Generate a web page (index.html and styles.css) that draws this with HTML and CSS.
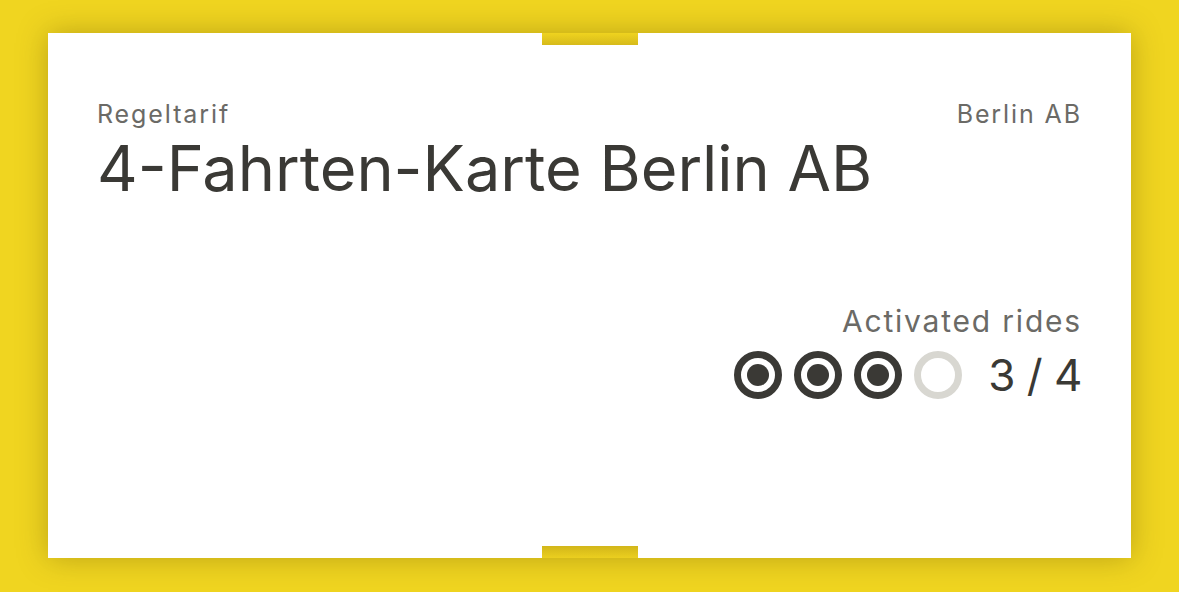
FILE: index.html
```html
<!DOCTYPE html>
<html lang="de">
<head>
<meta charset="utf-8">
<title>4-Fahrten-Karte Berlin AB</title>
<link rel="stylesheet" href="styles.css">
</head>
<body>
<div class="stage">
  <div class="ticket">
    <span class="notch notch-top"></span>
    <span class="notch notch-bottom"></span>
    <div class="head">
      <div class="head-main">
        <div class="label">Regeltarif</div>
        <h1 class="title">4-Fahrten-Karte Berlin AB</h1>
      </div>
      <div class="label">Berlin AB</div>
    </div>
    <div class="rides">
      <div class="rides-label">Activated rides</div>
      <div class="rides-row">
        <span class="dot on"></span>
        <span class="dot on"></span>
        <span class="dot on"></span>
        <span class="dot"></span>
        <span class="count">3 / 4</span>
      </div>
    </div>
  </div>
</div>
</body>
</html>
```
FILE: styles.css
```css
* { box-sizing: border-box; }
html, body {
  margin: 0;
  padding: 0;
  background: #f0d520;
  font-family: Inter, "Noto Sans", sans-serif;
  color: #3a3935;
}
.stage {
  width: 1179px;
  height: 592px;
  padding: 33px 48px 34px 48px;
}
.ticket {
  position: relative;
  width: 1083px;
  height: 525px;
  background: #fff;
  box-shadow: 0 0 28px rgba(90, 70, 0, 0.35);
  padding: 66px 49px 0 49px;
}
.notch {
  position: absolute;
  left: 494px;
  width: 96px;
  height: 12px;
}
.notch-top {
  top: 0;
  background: linear-gradient(#efd31f, #d6ba1b);
}
.notch-bottom {
  bottom: 0;
  background: linear-gradient(#d2b61a, #ebcf1f);
}
.head {
  display: flex;
  justify-content: space-between;
  align-items: flex-start;
}
.label {
  font-size: 25px;
  line-height: 30px;
  color: #6b6a66;
  letter-spacing: 1.9px;
}
.title {
  margin: 1px 0 0 0;
  font-size: 63px;
  line-height: 76px;
  font-weight: 400;
  letter-spacing: 0;
  color: #3a3935;
}
.rides {
  margin-top: 97px;
  display: flex;
  flex-direction: column;
  align-items: flex-end;
}
.rides-label {
  font-size: 30px;
  line-height: 36px;
  color: #6b6a66;
  letter-spacing: 1.8px;
}
.rides-row {
  margin-top: 12px;
  display: flex;
  align-items: center;
  gap: 12px;
}
.dot {
  width: 48px;
  height: 48px;
  border-radius: 50%;
  border: 7px solid #d8d7d1;
  display: flex;
  align-items: center;
  justify-content: center;
}
.dot.on { border-color: #3a3935; }
.dot.on::after {
  content: "";
  width: 22px;
  height: 22px;
  border-radius: 50%;
  background: #3a3935;
}
.count {
  margin-left: 14px;
  font-size: 44px;
  line-height: 48px;
  color: #3a3935;
  letter-spacing: -0.5px;
}
```
